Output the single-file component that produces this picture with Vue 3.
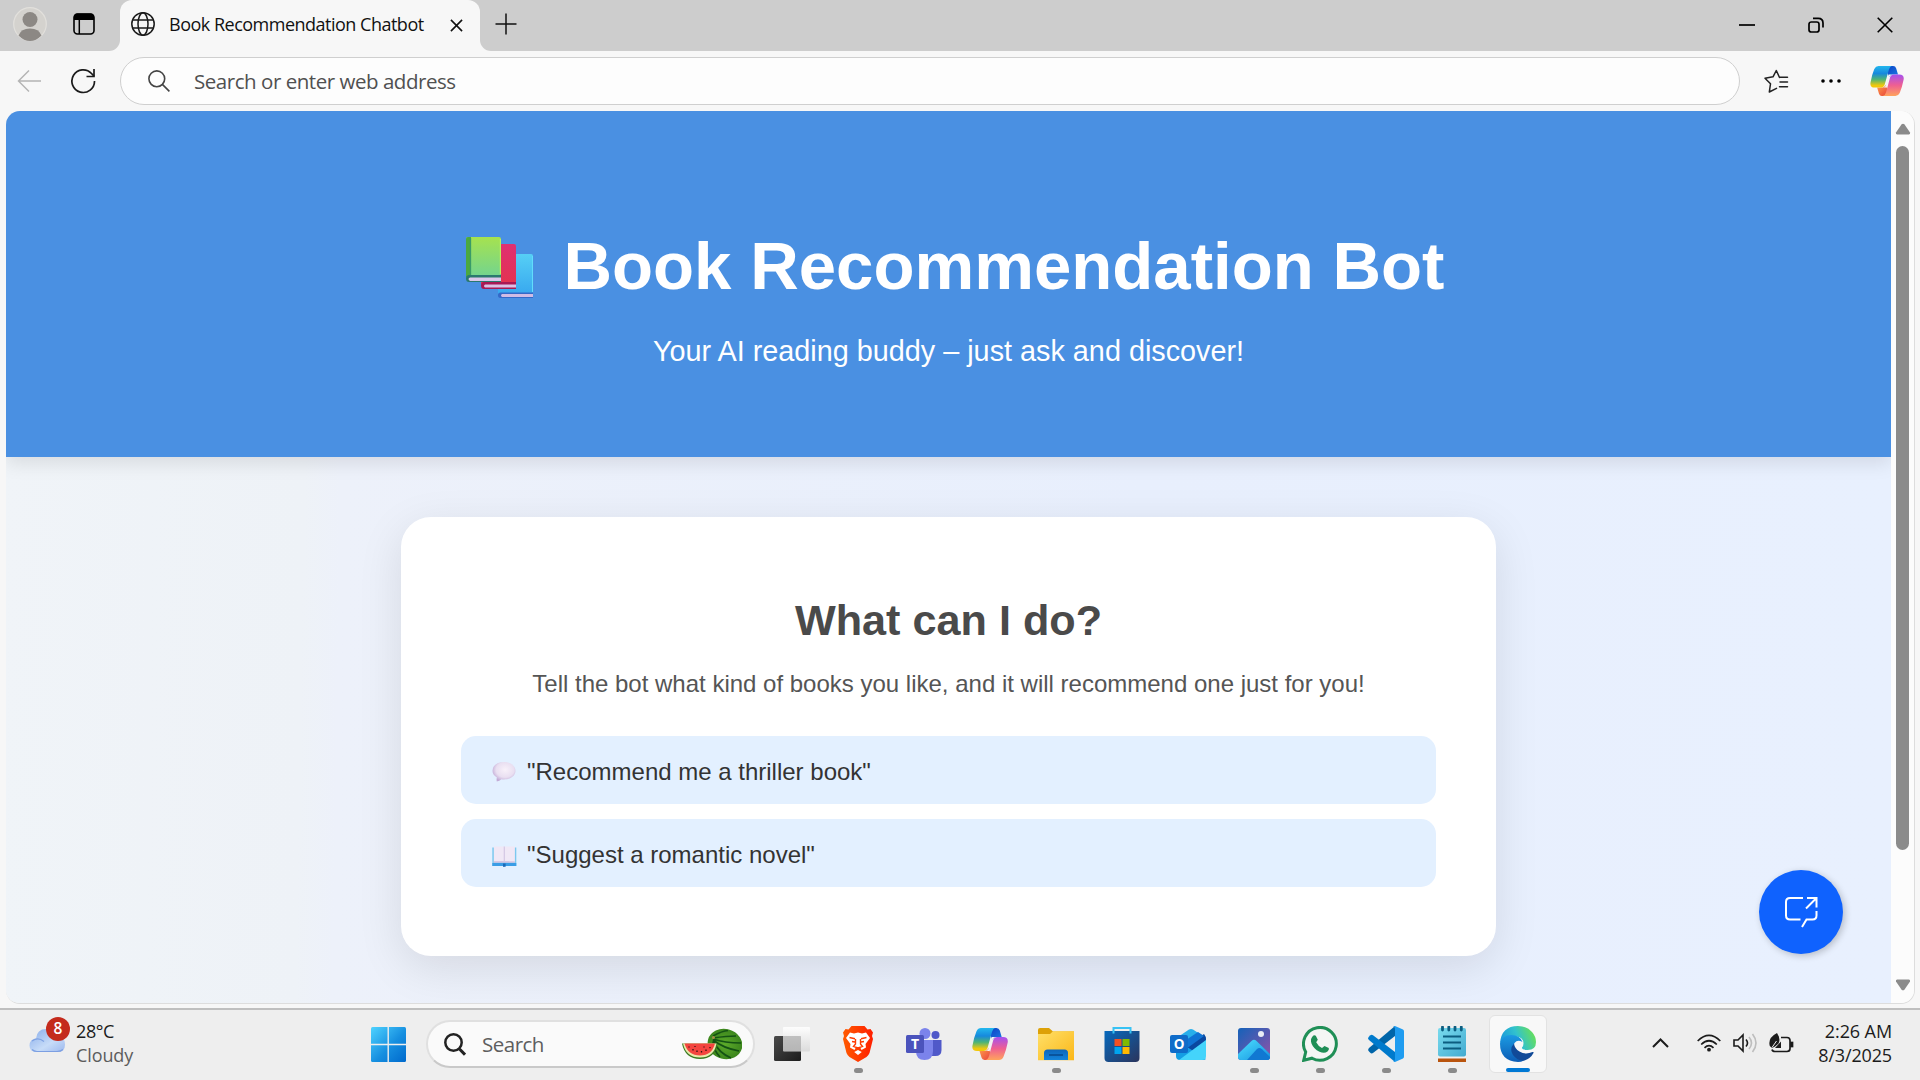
<script setup>
const suggestions = [
  { icon: 'chat', text: '"Recommend me a thriller book"' },
  { icon: 'book', text: '"Suggest a romantic novel"' },
]
const apps = [
  { id: 'taskview' },
  { id: 'brave', open: true },
  { id: 'teams' },
  { id: 'copilot' },
  { id: 'files', open: true },
  { id: 'store' },
  { id: 'outlook' },
  { id: 'photos', open: true },
  { id: 'whatsapp', open: true },
  { id: 'vscode', open: true },
  { id: 'notepad', open: true },
  { id: 'edge', active: true },
]
</script>

<template>
  <div class="desktop">
    <svg class="defs" width="0" height="0" aria-hidden="true">
      <defs>
        <linearGradient id="cpA" x1="0" y1="0" x2="0" y2="1"><stop offset="0" stop-color="#23b8ee" /><stop offset=".35" stop-color="#1689dd" /><stop offset=".62" stop-color="#4db476" /><stop offset=".9" stop-color="#f1c80c" /></linearGradient>
        <linearGradient id="cpB" x1="0" y1="0" x2="0" y2="1"><stop offset="0" stop-color="#a550f0" /><stop offset=".5" stop-color="#ef5f92" /><stop offset="1" stop-color="#ffa45c" /></linearGradient>
        <linearGradient id="cpC" x1="0" y1="0" x2="1" y2="1"><stop offset="0" stop-color="#0a3fc4" /><stop offset="1" stop-color="#1c7ae4" /></linearGradient>
        <linearGradient id="cpD" x1="0" y1="0" x2="1" y2="1"><stop offset="0" stop-color="#ffa04a" /><stop offset="1" stop-color="#e8403c" /></linearGradient>
        <symbol id="copilot" viewBox="0 0 36 34">
          <path d="M19 1h5.500q2.500 0 3.300 2.600l1.900 6.400h-5.200q-3 0-4 3L17 5z" fill="url(#cpC)" />
          <path d="M17 33h-4.500q-2.300 0-3-2.400L7.500 24h5q3 0 4-3l2.700 7z" fill="url(#cpD)" />
          <path d="M9 1h14q-2 .5-3 4l-4.500 16q-1 3-4 3H5q-5.500 0-4.500-5.500Q2 10 4.500 4.200 6 1 9 1z" fill="url(#cpA)" />
          <path d="M27 33H13.500q2.500-.5 3.500-4l4.300-16q1-3 4-3H31q5.500 0 4.700 5.500Q34 24 31.500 29.800 30 33 27 33z" fill="url(#cpB)" />
          <path d="M24.500 10q-3 0-4 3l-3 11h-3.200q2-.5 2.600-3l3-11z" fill="#f3f3f5" />
        </symbol>
      </defs>
    </svg>

    <div class="tabbar">
      <div class="tab-left">
        <svg class="avatar" viewBox="0 0 34 36"><circle cx="17" cy="18" r="16.300" fill="#d4d2ce" stroke="#e2e0dc" stroke-width="1.200" /><circle cx="17" cy="13.500" r="7.500" fill="#8c8884" /><path d="M5.500 29.500Q8 22.500 17 22.500t11.500 7Q23 35 17 35T5.500 29.500z" fill="#8c8884" /></svg>
        <svg class="panes" viewBox="0 0 22 22"><rect x="1" y="1" width="20" height="20" rx="3.500" fill="none" stroke="#000" stroke-width="1.600" /><path d="M1 7V4q0-3.500 3.500-3.500h13Q21 .5 21 4v3z" /><path d="M6.300 6v15" stroke="#000" stroke-width="1.500" /></svg>
      </div>
      <div class="tab-wrap">
        <div class="tab">
          <svg class="globe" viewBox="0 0 24 24" fill="none" stroke="#1b1b1b" stroke-width="1.500"><circle cx="12" cy="12" r="11.200" /><ellipse cx="12" cy="12" rx="5" ry="11.200" /><path d="M2 8h20M2 16h20" /></svg>
          <span class="tab-title">Book Recommendation Chatbot</span>
          <svg class="tab-x" viewBox="0 0 14 14" stroke="#111" stroke-width="1.700"><path d="M1 1l12 12M13 1L1 13" /></svg>
        </div>
      </div>
      <div class="tab-right">
        <svg class="plus" viewBox="0 0 22 22" stroke="#111" stroke-width="1.500"><path d="M11 .5v21M.5 11h21" /></svg>
        <div class="winctl">
          <svg viewBox="0 0 16 16" stroke="#000" stroke-width="1.700"><path d="M0 8h16" /></svg>
          <svg viewBox="0 0 16 16" stroke="#000" stroke-width="1.700" fill="none"><rect x="1" y="5" width="10" height="10" rx="2.300" /><path d="M5 1.300h5.200Q15 1.300 15 6v4.500" /></svg>
          <svg viewBox="0 0 16 16" stroke="#000" stroke-width="1.600"><path d="M.7.7l14.600 14.600M15.300.7L.7 15.300" /></svg>
        </div>
      </div>
    </div>

    <div class="toolbar">
      <svg class="back" viewBox="0 0 25 24" fill="none" stroke="#b4b4b4" stroke-width="1.500"><path d="M24 12H1.500M12 1.500L1.500 12 12 22.500" /></svg>
      <svg class="reload" viewBox="0 0 25 26" fill="none" stroke="#1b1b1b" stroke-width="1.700"><path d="M23.500 13A11.300 11.300 0 1 1 20.500 5.500L23 8.200" /><path d="M23 1v7.500h-7.500" /></svg>
      <div class="address">
        <svg class="mag" viewBox="0 0 22 22" fill="none" stroke="#444" stroke-width="1.600"><circle cx="8.800" cy="8.800" r="7.900" /><path d="M14.400 14.400l7 7" /></svg>
        <span>Search or enter web address</span>
      </div>
      <svg class="fav" viewBox="0 0 25 24" fill="none" stroke="#222" stroke-width="1.500" stroke-linejoin="round" stroke-linecap="round"><path d="M15.500 8.500L12.300 1.500 9 7.800 1 9.200l5.500 5.600L5.300 23l7.200-3.600M15.500 8.300h8M16 13h7.500M15.500 17.700h8" /></svg>
      <svg class="more" viewBox="0 0 20 4"><circle cx="2" cy="2" r="1.800" /><circle cx="10" cy="2" r="1.800" /><circle cx="18" cy="2" r="1.800" /></svg>
      <svg class="tool-copilot"><use href="#copilot" /></svg>
    </div>

    <div class="view">
      <main class="page">
        <header class="hero">
          <h1>
            <svg class="books" viewBox="0 0 68 62">
              <defs>
                <linearGradient id="bg1" x1="0" y1="0" x2="0" y2="1"><stop offset="0" stop-color="#a6e24f" /><stop offset="1" stop-color="#72d490" /></linearGradient>
                <linearGradient id="bg2" x1="0" y1="0" x2="0" y2="1"><stop offset="0" stop-color="#e03072" /><stop offset="1" stop-color="#e33350" /></linearGradient>
                <linearGradient id="bg3" x1="0" y1="0" x2="0" y2="1"><stop offset="0" stop-color="#56cff5" /><stop offset="1" stop-color="#38a8ef" /></linearGradient>
              </defs>
              <path d="M32 19q0-2 2-2h31q2 0 2 2v38H32z" fill="url(#bg3)" /><path d="M67 55.500H34.500q-2.500 0-2.500 2.800t2.500 2.700H67z" fill="#3469c9" /><path d="M67 57H36q-2 1.500 0 3h31z" fill="#cfbce5" /><path d="M66.500 19v36" stroke="#62dcfb" />
              <path d="M15 9q0-2 2-2h31q2 0 2 2v38H15z" fill="url(#bg2)" /><path d="M50 45H18q-3 0-3 3.500t3 3.500h32z" fill="#a91955" /><path d="M50 47.500H19q-2 1.500 0 3h31z" fill="#dcc0e5" />
              <path d="M0 2q0-2 2-2h31q2 0 2 2v38H0z" fill="url(#bg1)" /><path d="M0 2q0-2 2-2h3v40H0z" fill="#4ba83f" /><path d="M4.500 1v38" stroke="#399b68" stroke-width="1.300" /><path d="M35 38H3q-3 0-3 3.500T3 45h32z" fill="#2a796f" /><path d="M35 40.500H4q-3 1.300 0 3.500h31z" fill="#dbc8ea" /><path d="M34.400 2v35" stroke="#b8ef5d" stroke-width="1.200" />
            </svg>
            <span>Book Recommendation Bot</span>
          </h1>
          <p>Your AI reading buddy – just ask and discover!</p>
        </header>
        <section class="card">
          <h2>What can I do?</h2>
          <p class="lead">Tell the bot what kind of books you like, and it will recommend one just for you!</p>
          <ul>
            <li v-for="s in suggestions" :key="s.icon">
              <svg v-if="s.icon === 'chat'" class="emoji" viewBox="0 0 25 24">
                <defs><radialGradient id="cb" cx=".55" cy=".4" r=".6"><stop offset="0" stop-color="#f8f1fa" /><stop offset=".65" stop-color="#e9dff1" /><stop offset="1" stop-color="#c2abd6" /></radialGradient></defs>
                <path d="M12 2c6.500 0 11.500 3.800 11.500 8.800S18.500 19.500 12 19.500q-1.500 0-2.600-.3Q7.500 21 4.800 21.400q-.5-2 .1-4Q.5 15 .5 10.800.5 5.800 5.500 3.300 8.500 2 12 2z" fill="url(#cb)" />
              </svg>
              <svg v-else class="emoji" viewBox="0 0 25 24">
                <path d="M.3 4.500h24v18.500H.3z" fill="#7cc8ef" /><path d="M.3 20h24v3H.3z" fill="#3a9de6" /><path d="M1.800 3.500h10.400v16H1.800zM12.400 3.500h10.500v16H12.400z" fill="#f0e8f6" /><path d="M1.800 18.400h21v1.100h-21z" fill="#c3b1d8" /><path d="M12.300 3.500v15.500" stroke="#d6c8e4" stroke-width="1.200" /><path d="M11 20.500h2.600v3.300H11z" fill="#1c69b8" />
              </svg>
              <span>{{ s.text }}</span>
            </li>
          </ul>
        </section>
        <div class="fab">
          <svg viewBox="0 0 34 32" fill="none" stroke="#fff" stroke-width="2"><path d="M19 2H6Q2 2 2 6v13.500q0 4 4 4h10.500M32.500 15v4.500q0 4-4 4h-6L18 31M23 2h9.500v9.500M32 2.500L22 12.500" /></svg>
        </div>
      </main>
      <aside class="scroll">
        <svg viewBox="0 0 16 12"><path d="M6.600 1.300Q8 0 9.400 1.300L15 9.500Q15.500 11.500 13.700 11.500H2.300Q.5 11.500 1 9.500z" fill="#8b8b8b" /></svg>
        <div class="thumb"></div>
        <svg class="down" viewBox="0 0 16 12"><path d="M6.600 10.700Q8 12 9.400 10.700L15 2.500Q15.500.5 13.700.5H2.300Q.5.500 1 2.500z" fill="#8b8b8b" /></svg>
      </aside>
    </div>

    <footer class="taskbar">
      <div class="weather">
        <svg viewBox="0 0 42 36">
          <defs><linearGradient id="cl" x1="0" y1="0" x2="1" y2="1"><stop offset="0" stop-color="#86abea" /><stop offset=".6" stop-color="#c7dcf8" /><stop offset="1" stop-color="#9cb8ee" /></linearGradient></defs>
          <path d="M7 35q-6.500-.5-6.500-6.500T7 21.500Q8 12 17 12q7 0 10 7 9 0 9 8.500 0 7-7 7.500z" fill="url(#cl)" /><path d="M3 24q6-4.500 12 .5" fill="none" stroke="#7fa2e3" stroke-width="1.200" /><path d="M3 32.500q2 2 5 2h20q4 0 6-2" fill="none" stroke="#7c9fe2" stroke-width="1.200" />
          <circle cx="29" cy="12" r="12" fill="#c42b1c" />
          <text x="29" y="17.300" text-anchor="middle" fill="#fff" font-size="15.500" font-weight="600">8</text>
        </svg>
        <div class="wtext"><span class="deg">28°C</span><span class="cond">Cloudy</span></div>
      </div>
      <svg class="start" viewBox="0 0 35 35">
        <defs><linearGradient id="wn" x1="0" y1="0" x2="1" y2="1" ><stop offset="0" stop-color="#4fd3ff" /><stop offset=".55" stop-color="#168fe0" /><stop offset="1" stop-color="#0069cc" /></linearGradient></defs>
        <rect width="35" height="35" rx="1.500" fill="url(#wn)" /><path d="M17.200 0v35M0 17.500h35" stroke="#eee" stroke-width="1.400" />
      </svg>
      <div class="search">
        <svg class="smag" viewBox="0 0 22 23" fill="none" stroke="#222" stroke-width="2.500"><circle cx="9.500" cy="9.500" r="8.200" /><path d="M15.500 16l5.500 5.700" stroke-width="3" /></svg>
        <span>Search</span>
        <svg class="melon" viewBox="0 0 60 32">
          <defs><radialGradient id="wm"><stop offset="0" stop-color="#5cab2a" /><stop offset="1" stop-color="#3c861d" /></radialGradient></defs>
          <ellipse cx="43" cy="16" rx="17.500" ry="15" transform="rotate(15 43 16)" fill="url(#wm)" />
          <path d="M31 8q9-5 15-5.500M31 10q14-2 23-2M31 11q12 4 28 4M31 12q10 8 26 11M31 13q6 12 18 17M31 14q1 9 7 15" fill="none" stroke="#145214" stroke-width="1.700" />
          <circle cx="31.500" cy="9.500" r="1.500" fill="#a58f45" />
          <path d="M0 15.500h35.500Q33 31 18 31 3 31 0 15.500z" fill="#397a20" /><path d="M1 15.500h33.500Q32 29.500 18 29.500 4 29.500 1 15.500z" fill="#e9e9ad" /><path d="M2.500 15.500H33Q30 27.500 18 27.500 6 27.500 2.500 15.500z" fill="#f4443e" />
          <path d="M7 18.500v1M11 21v1.500M15 22.500v1.500M19.500 23v1.500M24 21.500V23M28 19v1.200M13 18v1M22 18.500v1" stroke="#351313" stroke-width="1.300" />
        </svg>
      </div>
      <nav class="apps">
        <div v-for="a in apps" :key="a.id" class="slot" :class="{ open: a.open, active: a.active }">
          <svg v-if="a.id === 'taskview'" class="ico" viewBox="0 0 36 36">
            <defs><linearGradient id="tv" x1="0" y1="0" x2="1" y2="1"><stop offset="0" stop-color="#4a4a4a" /><stop offset="1" stop-color="#1c1c1c" /></linearGradient><linearGradient id="tw" x1="0" y1="0" x2="0" y2="1"><stop offset="0" stop-color="#fff" /><stop offset="1" stop-color="#d9d9d9" /></linearGradient></defs>
            <rect x="0" y="10" width="27" height="25" rx="1.500" fill="url(#tv)" /><rect x="9" y="1" width="27" height="24.500" rx="1" fill="url(#tw)" opacity=".88" /><path d="M9 10h18v15H9z" fill="#aaa" opacity=".55" />
          </svg>
          <svg v-else-if="a.id === 'brave'" class="ico" viewBox="0 0 36 36">
            <defs><linearGradient id="br"><stop offset="0" stop-color="#ff5a00" /><stop offset="1" stop-color="#ff1f00" /></linearGradient></defs>
            <path d="M11.500 0h13l3 3.500 3-.5L33 6.500 32 10l1 3-3.500 14q-1 2.500-3 4L18 36l-8.500-5q-2-1.500-3-4L3 13l1-3-1-3.500L5.500 3l3 .5z" fill="url(#br)" />
            <path d="M10 6.500l4 1 4-1 4 1 4-1 4 5.500-4.500 6 .5 3.500-4.500 2.500-1-2-2.500-1-2.500 1-1 2L10 21.500l.5-3.500L6 12zM18 24l3.800 2L18 29l-3.800-3z" fill="#fff" />
            <path d="M9.500 11.500l5.500 1.200M26.500 11.500L21 12.700M15.500 13v5l-2 2.500 4.500 1.500 4.500-1.500-2-2.500v-5M12 15.500l3 .5M24 15.500l-3 .5" fill="none" stroke="#ff3a00" stroke-width="1.400" />
          </svg>
          <svg v-else-if="a.id === 'teams'" class="ico" viewBox="0 0 36 36">
            <circle cx="29.500" cy="9" r="4" fill="#5059c9" /><path d="M24 14h11.500v10q0 6-6 6H24z" fill="#5059c9" /><circle cx="19" cy="7.500" r="5.500" fill="#7b83eb" /><path d="M10 14h17v11q0 9-8.500 9T10 25z" fill="#7b83eb" /><rect x="0" y="9" width="18" height="18" rx="1.500" fill="#4b53bc" /><text x="9" y="23" text-anchor="middle" font-size="14" font-weight="700" fill="#fff">T</text>
          </svg>
          <svg v-else-if="a.id === 'copilot'" class="ico"><use href="#copilot" /></svg>
          <svg v-else-if="a.id === 'files'" class="ico" viewBox="0 0 36 36">
            <defs><linearGradient id="fo" x1="0" y1="0" x2="1" y2="1"><stop offset="0" stop-color="#ffe069" /><stop offset="1" stop-color="#fbb718" /></linearGradient><linearGradient id="fp" x1="0" y1="0" x2="0" y2="1"><stop offset="0" stop-color="#0e65b8" /><stop offset="1" stop-color="#1384dc" /></linearGradient></defs>
            <path d="M0 4q0-2 2-2h9l4 3.500H36V12H0z" fill="#dda107" /><path d="M0 8h12l3-2.800h21v29H0z" fill="url(#fo)" /><path d="M6 34V27q0-3.500 3.500-3.500h17q3.500 0 3.500 3.500v7z" fill="url(#fp)" /><path d="M11 29h14" stroke="#07498d" stroke-width="1.500" />
          </svg>
          <svg v-else-if="a.id === 'store'" class="ico" viewBox="0 0 36 36">
            <defs><linearGradient id="st" x1="0" y1="0" x2="1" y2="1"><stop offset="0" stop-color="#0669bd" /><stop offset="1" stop-color="#2b345c" /></linearGradient></defs>
            <path d="M.5 5h35v27q0 4-4 4h-27q-4 0-4-4z" fill="url(#st)" /><path d="M9.500 7.500V2h17v5.500" fill="none" stroke="#37c2f4" stroke-width="2" /><path d="M10.500 13h7v7h-7z" fill="#f25022" /><path d="M18.500 13h7v7h-7z" fill="#7fba00" /><path d="M10.500 21h7v7h-7z" fill="#00a4ef" /><path d="M18.500 21h7v7h-7z" fill="#ffb900" />
          </svg>
          <svg v-else-if="a.id === 'outlook'" class="ico" viewBox="0 0 36 36">
            <path d="M5 13L19 3.500q2-1 4 0L36 12v12L20 27z" fill="#28afea" /><path d="M14 22L34 8q2 2 2 6v1L17 30z" fill="#0a48a0" /><path d="M13 16L28 6l6 4-18 13z" fill="#1073d4" /><path d="M6 14l30 19q-1 1-3 1H10q-4 0-4-4z" fill="#149de4" /><path d="M36 14v16q0 4-4 4H9z" fill="#44d4fb" /><rect x="0" y="9" width="18" height="18" rx="2" fill="#0f6cc9" /><text x="9" y="22.800" text-anchor="middle" font-size="13.500" font-weight="700" fill="#fff">O</text>
          </svg>
          <svg v-else-if="a.id === 'photos'" class="ico" viewBox="0 0 36 36">
            <defs><linearGradient id="ph" x1="0" y1="0" x2="1" y2="1"><stop offset="0" stop-color="#1462b9" /><stop offset="1" stop-color="#9352a8" /></linearGradient><linearGradient id="pm" x1="0" y1="0" x2="1" y2="1"><stop offset="0" stop-color="#4de0ff" /><stop offset="1" stop-color="#1490df" /></linearGradient></defs>
            <rect x="2" y="2" width="32" height="32" rx="3" fill="url(#ph)" /><path d="M2 28l13.500-13q2.500-2.300 5 0L34 28v3q0 3-3 3H5q-3 0-3-3z" fill="url(#pm)" /><path d="M11 34l10-11q2.500-2 5 .3L34 31q0 3-3 3z" fill="#1178d2" /><circle cx="25" cy="8" r="3" fill="#e9edf5" />
          </svg>
          <svg v-else-if="a.id === 'whatsapp'" class="ico" viewBox="0 0 36 36">
            <path d="M1.700 34.300l2-8.300A16.400 16.400 0 1 1 10 32.200z" fill="#f4f6f4" stroke="#1f8f56" stroke-width="3" /><path d="M10.500 10.500q1.500-2 3.300-.7l2 4-1.600 2.400q2 4 5.800 5.700l2.500-2 4.300 2.200q.6 1.900-1.300 3.400-3 2.500-8 .3-6-3-8-8.300-1.500-4.500 1-7z" fill="#1f8f56" />
          </svg>
          <svg v-else-if="a.id === 'vscode'" class="ico" viewBox="0 0 36 36">
            <path d="M27 0v10L5 27q-1.500 1-3-.5L.6 25q-1-1.500.4-3z" fill="#0065a9" /><path d="M27 36V26L5 9.200q-1.500-1-3 .3L.6 11q-1 1.500.4 3z" fill="#007acc" /><path d="M25 35.500q2 0 2-2.500V3q0-2.500-2-2.500L27 0l8 3.500q1 .5 1 2v25q0 1.500-1 2L27 36z" fill="#1f9cf0" />
          </svg>
          <svg v-else-if="a.id === 'notepad'" class="ico" viewBox="0 0 36 36">
            <defs><linearGradient id="np" x1="0" y1="0" x2="1" y2="1"><stop offset="0" stop-color="#79dbee" /><stop offset="1" stop-color="#44abd0" /></linearGradient></defs>
            <path d="M4 31h28v5H4z" fill="#b9540e" /><path d="M4 28h28v4.500H4z" fill="#f5f1ee" /><rect x="4" y="2" width="28" height="28.500" rx="2" fill="url(#np)" /><path d="M9 10.500h18M9 16.500h18M9 22.500h18" stroke="#0c5d80" stroke-width="1.800" /><path d="M8.500 1v3M14.800 1v3M21 1v3M27.300 1v3" stroke="#0c5d80" stroke-width="2.800" stroke-linecap="round" />
          </svg>
          <svg v-else class="ico" viewBox="0 0 36 36">
            <defs><linearGradient id="e1" y1=".6" y2=".3"><stop offset="0" stop-color="#1795dd" /><stop offset=".5" stop-color="#32c2cd" /><stop offset="1" stop-color="#6be24f" /></linearGradient><linearGradient id="e2" x1="0" y1="0" x2="0" y2="1"><stop offset="0" stop-color="#1b9be2" /><stop offset="1" stop-color="#0d5cb5" /></linearGradient></defs>
            <path d="M0 17Q1.500 0 18 0q9 0 14 6 4 4.500 4 10 0 8-8.500 8-6 0-5.500-2.500 1.500-1.500 1.500-4 0-6-7-7Q8 9.500 0 17z" fill="url(#e1)" /><path d="M0 17.500Q2 9 11 9q9 0 11.500 7-5-3-8 1-3 5 1.500 10.500 4 4.500 8 7Q21 36 18 36 0 35 0 17.500z" fill="url(#e2)" /><path d="M14 17.500Q9 23 13 29q5 6.500 11.500 5.500 6-2 9-7.500.5-1.500-1-1-7 3-13-.5-5-3-5.500-8z" fill="#114a98" />
          </svg>
          <i v-if="a.open || a.active"></i>
        </div>
      </nav>
      <div class="tray">
        <svg class="chev" viewBox="0 0 17 10" fill="none" stroke="#1b1b1b" stroke-width="2"><path d="M1 9l7.500-7.500L16 9" /></svg>
        <svg class="wifi" viewBox="0 0 24 18" fill="none" stroke="#1b1b1b" stroke-width="1.700"><path d="M.7 7Q12-4.300 23.300 7M4.200 10.500q7.800-7.500 15.600 0M7.500 13.800q4.500-4.300 9 0" /><circle cx="12" cy="15.700" r="1.900" fill="#1b1b1b" stroke="none" /></svg>
        <svg class="vol" viewBox="0 0 25 20" fill="none" stroke="#1b1b1b" stroke-width="1.600"><path d="M1 7h4l5-5v16l-5-5H1zM13 6.500q3 3.500 0 7" /><path d="M16 4q5 6 0 12M19.500 1q7 9 0 18" stroke="#bdbdbd" /></svg>
        <svg class="bat" viewBox="0 0 25 20" fill="none" stroke="#1b1b1b" stroke-width="1.700"><path d="M12 4.500h6q3 0 3 3v8q0 3-3 3H6q-2.500 0-3-2" /><path d="M22 9.500h1.500v4H22z" fill="#1b1b1b" /><path d="M.8 13Q-1.500 5 8 0q4 6 1.500 10.500l-3.500 3-3 1.500zM12 8.500V15H6z" fill="#1b1b1b" stroke="none" /><path d="M3 14.500L7.500 8" stroke="#eee" stroke-width="1" /></svg>
        <div class="clock"><span class="time">2:26 AM</span><span class="date">8/3/2025</span></div>
      </div>
    </footer>
  </div>
</template>

<style>
body { margin: 0; overflow: hidden; }
</style>

<style scoped>
* { box-sizing: border-box; }
svg { display: block; flex: none; }
.desktop { width: 1920px; height: 1080px; display: flex; flex-direction: column; background: #f7f7f7; font-family: "Open Sans", "Noto Sans", sans-serif; overflow: hidden; }
.defs { position: absolute; }

.tabbar { display: flex; height: 51px; flex: none; }
.tab-left { width: 120px; background: #cdcdcd; border-bottom-right-radius: 11px; display: flex; align-items: center; padding-left: 13px; }
.avatar { width: 34px; height: 36px; margin-top: -3px; }
.panes { width: 22px; height: 22px; margin: -3px 0 0 26px; }
.tab-wrap { width: 360px; background: linear-gradient(#cdcdcd 50%, #f7f7f7 50%); }
.tab { height: 51px; background: #f7f7f7; border-radius: 12px 12px 0 0; display: flex; align-items: center; padding: 0 17px 3px 11px; }
.globe { width: 24px; height: 24px; }
.tab-title { margin: -1px 0 0 14px; font-size: 18px; letter-spacing: -0.5px; line-height: 24px; white-space: nowrap; color: #111; }
.tab-x { width: 13px; height: 13px; margin: 2px 0 0 auto; }
.tab-right { flex: 1; background: #cdcdcd; border-bottom-left-radius: 11px; display: flex; align-items: center; justify-content: space-between; padding: 0 27px 0 15px; }
.plus { width: 22px; height: 22px; margin-top: -4px; }
.winctl { display: flex; gap: 53px; margin-top: -1px; }
.winctl svg { width: 16px; height: 16px; }

.toolbar { height: 60px; flex: none; display: flex; align-items: center; padding-left: 17px; }
.back { width: 25px; height: 24px; }
.reload { width: 25px; height: 26px; margin-left: 29px; }
.address { width: 1620px; height: 48px; margin-left: 24px; border: 1.500px solid #cfcfcf; border-radius: 24px; background: #fdfdfd; display: flex; align-items: center; padding-left: 27px; color: #505050; font-size: 20.500px; letter-spacing: -0.46px; white-space: nowrap; }
.mag { width: 22px; height: 22px; margin-right: 24px; }
.fav { width: 25px; height: 24px; margin-left: 24px; }
.more { width: 20px; height: 4px; margin-left: 32px; }
.tool-copilot { width: 34px; height: 32px; margin-left: 29px; }

.view { height: 893px; width: 1909px; margin-left: 6px; flex: none; display: flex; border-radius: 14px; overflow: hidden; border-bottom: 1px solid #ddd; border-right: 1px solid #ddd; }
.page { width: 1885px; height: 893px; position: relative; background: linear-gradient(91deg, #f0f4f8 0%, #eef2f7 16%, #edf1fa 18%, #e8effd 60%, #e8f0fe 100%); font-family: "Liberation Sans", Arial, sans-serif; overflow: hidden; }
.hero { height: 346px; background: #4a90e2; color: #fff; text-align: center; padding-top: 116px; box-shadow: 0 6px 18px rgba(0, 0, 0, 0.1); }
h1 { margin: 0; display: flex; justify-content: center; font-size: 67.200px; line-height: 78px; font-weight: 700; white-space: nowrap; padding-left: 13px; }
.books { width: 68px; height: 62px; margin: 10px 30px 0 0; }
.hero p { margin: 29px 0 0; font-size: 28.800px; line-height: 34px; }
.card { width: 1095px; height: 439px; margin: 60px 0 0 395px; background: #fff; border-radius: 30px; box-shadow: 0 12px 45px rgba(0, 0, 0, 0.1); padding: 78px 60px 0; }
h2 { margin: 0; text-align: center; font-size: 43.200px; line-height: 50px; color: #4a4a4a; }
.lead { margin: 25px 0 0; text-align: center; font-size: 24px; line-height: 28px; color: #555; white-space: nowrap; }
ul { list-style: none; margin: 38px 0 0; padding: 0; display: flex; flex-direction: column; gap: 15px; }
li { height: 68px; background: #e3f0ff; border-radius: 15px; display: flex; align-items: center; padding: 3px 0 0 31px; font-size: 24px; line-height: 28px; color: #333; }
.emoji { width: 25px; height: 24px; margin-right: 10px; }
.fab { position: absolute; right: 48px; bottom: 50px; width: 84px; height: 84px; border-radius: 50%; background: #0f62fe; display: flex; align-items: center; justify-content: center; box-shadow: 2px 2px 7px rgba(0, 0, 0, 0.22); }
.fab svg { width: 34px; height: 32px; }
.scroll { flex: 1; background: #fcfcfc; display: flex; flex-direction: column; align-items: center; padding-top: 12px; }
.scroll svg { width: 16px; height: 12px; }
.thumb { width: 13px; height: 704px; margin-top: 11px; border-radius: 7px; background: #8b8b8b; }
.down { margin-top: 129px; }

.taskbar { margin-top: 4px; height: 72px; flex: none; background: #eee; border-top: 2px solid #bfbfbf; display: flex; }
.weather { width: 371px; padding: 7px 0 0 29px; display: flex; }
.weather svg { width: 42px; height: 36px; }
.wtext { margin: 2px 0 0 5px; display: flex; flex-direction: column; font-size: 18px; line-height: 24px; }
.deg { color: #1b1b1b; letter-spacing: -0.4px; }
.cond { color: #5c5c5c; letter-spacing: -0.1px; }
.start { width: 35px; height: 35px; margin-top: 17px; }
.search { width: 329px; height: 48px; margin: 10px 0 0 20px; border: 2px solid #e0e0e0; border-bottom-color: #c9c9c9; border-radius: 24px; background: #fafafa; display: flex; align-items: center; padding: 0 11px 0 16px; font-size: 20.500px; letter-spacing: -0.5px; color: #5e5e5e; }
.smag { width: 22px; height: 23px; margin-right: 16px; }
.melon { width: 60px; height: 32px; margin-left: auto; }
.apps { display: flex; margin: 5px 0 0 4px; }
.slot { width: 66px; height: 58px; display: flex; flex-direction: column; align-items: center; padding-top: 11px; }
.ico { width: 36px; height: 36px; }
.slot i { width: 9px; height: 5px; border-radius: 3px; background: #8a8a8a; margin-top: 6px; }
.slot.active { width: 58px; margin-left: 4px; padding-top: 10px; background: #f8f8f8; border: 1px solid #e2e2e2; border-radius: 6px; }
.slot.active i { width: 24px; background: #0078d4; }
.tray { margin-left: auto; display: flex; align-items: center; padding: 0 28px 5px 0; }
.chev { width: 17px; height: 10px; margin-right: 28px; }
.wifi { width: 24px; height: 18px; margin-right: 12px; }
.vol { width: 25px; height: 20px; margin-right: 11px; }
.bat { width: 25px; height: 20px; margin-right: 6px; }
.clock { display: flex; flex-direction: column; align-items: flex-end; width: 92px; font-size: 18px; line-height: 24px; color: #1b1b1b; white-space: nowrap; }
.time { letter-spacing: -0.1px; }
.date { letter-spacing: -0.15px; }
</style>
